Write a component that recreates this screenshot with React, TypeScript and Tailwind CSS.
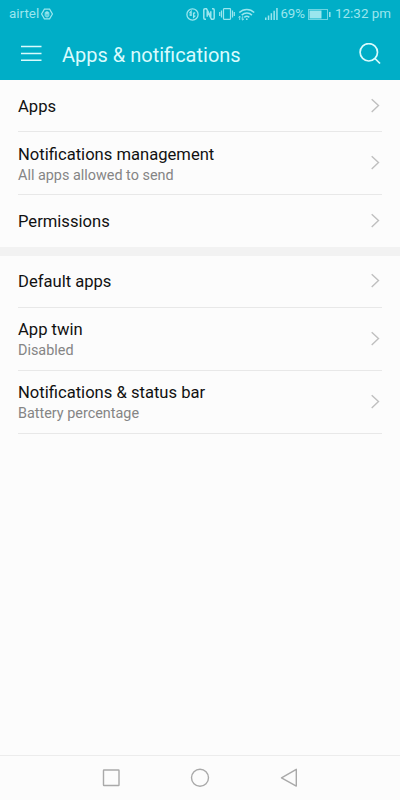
type RowProps = { title: string; detail?: string; divider?: boolean };

function Chevron() {
  return (
    <svg className="h-4 w-2.5 shrink-0" viewBox="0 0 10 16" fill="none" stroke="#bfbfbf" strokeWidth="1.400">
      <path d="M1.700 1.200 8.500 7.600 1.700 14" />
    </svg>
  );
}

function Row({ title, detail, divider = true }: RowProps) {
  return (
    <div
      className={`mr-[18px] ml-[18px] flex items-center justify-between ${detail ? "h-[63px]" : "h-[52px]"} ${
        divider ? "border-b border-[#e8e8e8]" : ""
      }`}
    >
      <div className={`flex flex-col ${detail ? "pt-[3px]" : "pt-[2px]"}`}>
        <span className="text-[16.6px] leading-[22px] text-[#111111]">{title}</span>
        {detail && <span className="text-[14.4px] leading-5 text-[#858585]">{detail}</span>}
      </div>
      <div className="mr-[2px] flex">
        <Chevron />
      </div>
    </div>
  );
}

function StatusBar() {
  return (
    <div className="flex h-7 items-center justify-between pr-[9px] pl-[9px] text-[#9be6ee]">
      <div className="flex items-center gap-[2px]">
        <span className="text-[13.4px] leading-4">airtel</span>
        <svg className="h-3 w-3" viewBox="0 0 12 12" fill="none" stroke="currentColor" strokeWidth="1.2">
          <path d="M3.400 1.100h5.200L11.400 6l-2.800 4.900H3.400L.6 6z" />
          <path d="M4.100 4.500h3.800v3L6.800 9H5.200L4.100 7.500z" fill="currentColor" fillOpacity=".6" strokeWidth=".8" />
          <path d="M5.300 6V3.200M6.700 6V3.200" strokeWidth="1" />
        </svg>
      </div>
      <div className="flex items-center">
        <svg className="h-[13px] w-[13px]" viewBox="0 0 13 13" fill="none" stroke="currentColor" strokeWidth="1.300">
          <circle cx="6.500" cy="6.500" r="5.600" />
          <path d="M5.100 8V3.500L3.500 5.200M7.600 4.800v4.500L9.400 7.600M7.600 5h1.600M3.500 7h1.600" />
        </svg>
        <svg className="ml-[4px] h-3 w-3" viewBox="0 0 12 12" fill="none" stroke="currentColor" strokeWidth="1.500">
          <path d="M3 11.200H1.900A1.100 1.100 0 0 1 .8 10.100V1.900A1.100 1.100 0 0 1 1.900.8h1.600l4.300 8V3.300" />
          <path d="M9 .8h1.100a1.100 1.100 0 0 1 1.100 1.100v8.200a1.100 1.100 0 0 1-1.100 1.100H8.500l-4.300-8v5.500" />
        </svg>
        <svg className="ml-[4px] h-3 w-4" viewBox="0 0 16 12" fill="none" stroke="currentColor" strokeWidth="1.200">
          <rect x="4.500" y=".7" width="7" height="10.600" rx=".5" />
          <path d="M2.500 2.500v7M13.500 2.500v7M.7 4v4M15.300 4v4" />
        </svg>
        <svg className="ml-[3px] h-[13px] w-[17px]" viewBox="0 0 17 13" fill="none" stroke="currentColor" strokeWidth="1.500">
          <path d="M1.300 4.600C5.500.3 12.200.3 16.200 4.600M3.700 7.100c3-2.900 7.300-2.900 10.200 0M6.300 9.400c1.500-1.400 3.500-1.400 5 0" />
          <circle cx="8.800" cy="11.200" r=".9" fill="currentColor" stroke="none" />
          <path d="M1.700 12V8.300M.4 9.500l1.300-1.300L3 9.500M4.700 8.300V12M3.400 10.800 4.700 12 6 10.800" strokeWidth=".9" />
        </svg>
        <svg className="ml-[10px] h-3 w-[13px]" viewBox="0 0 13 12" fill="currentColor">
          <path d="M0 9.500h1.500V12H0zM2.800 7.500h1.500V12H2.800zM5.600 5.200h1.500V12H5.600zM8.400 2.800h1.500V12H8.400zM11.200 0h1.500v12h-1.500z" />
        </svg>
        <span className="ml-[2px] text-[13.300px] leading-4">69%</span>
        <svg className="ml-[3px] h-[11px] w-[23px]" viewBox="0 0 23 11" fill="none" stroke="currentColor">
          <rect x=".5" y=".5" width="19" height="10" strokeOpacity=".7" />
          <path d="M1.500 1.500h12v8h-12z" fill="currentColor" stroke="none" />
          <path d="M21.800 3v5" strokeWidth="1.500" />
        </svg>
        <span className="ml-[4px] text-[13.400px] leading-4">12:32 pm</span>
      </div>
    </div>
  );
}

export default function App() {
  return (
    <div className="flex h-[800px] w-[400px] flex-col overflow-hidden bg-[#fcfcfc] font-[Roboto,sans-serif]">
      <header className="h-20 shrink-0 bg-[#00aec7]">
        <StatusBar />
        <div className="flex h-[52px] items-center pr-[19.500px] pl-[21px] text-[#d9fbfd]">
          <svg className="h-5 w-[21px]" viewBox="0 0 21 20" fill="none" stroke="currentColor" strokeWidth="1.600">
            <path d="M0 2.500h20.500M0 9.500h20.500M0 16.300h20.500" />
          </svg>
          <h1 className="ml-5 flex-1 pt-px text-[20px] leading-6">Apps &amp; notifications</h1>
          <svg className="h-[22px] w-[22px]" viewBox="0 0 22 22" fill="none" stroke="currentColor" strokeWidth="1.700">
            <circle cx="9.800" cy="9.300" r="8.700" />
            <path d="m16 15.500 5 5" />
          </svg>
        </div>
      </header>
      <main className="flex-1">
        <section>
          <Row title="Apps" />
          <Row title="Notifications management" detail="All apps allowed to send" />
          <Row title="Permissions" divider={false} />
        </section>
        <div className="h-[8.500px] bg-[#f2f2f2]" />
        <section>
          <Row title="Default apps" />
          <Row title="App twin" detail="Disabled" />
          <Row title="Notifications & status bar" detail="Battery percentage" />
        </section>
      </main>
      <nav className="flex h-[45px] shrink-0 items-center justify-center gap-[69px] border-t border-[#ececec]">
        <svg className="h-5 w-5" viewBox="0 0 20 20" fill="none" stroke="#a9a9a9" strokeWidth="1.400">
          <rect x="2.500" y="2" width="15.500" height="15.500" rx=".5" />
        </svg>
        <svg className="h-5 w-5" viewBox="0 0 20 20" fill="none" stroke="#a9a9a9" strokeWidth="1.400">
          <circle cx="10" cy="9.800" r="8.500" />
        </svg>
        <svg className="h-5 w-5" viewBox="0 0 20 20" fill="none" stroke="#a9a9a9" strokeWidth="1.400" strokeLinejoin="round">
          <path d="M17.300 1.300v16.800L2.500 9.800z" />
        </svg>
      </nav>
    </div>
  );
}
